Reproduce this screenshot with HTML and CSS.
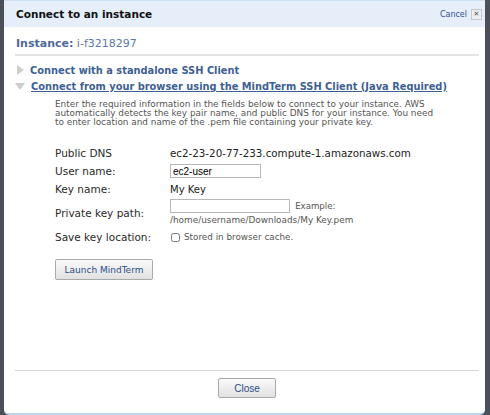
FILE: index.html
```html
<!DOCTYPE html>
<html lang="en">
<head>
    <meta charset="UTF-8">
    <title>Connect to an instance</title>
    <link rel="stylesheet" href="styles.css">
</head>
<body>
    <div class="dialog">
        <div class="dialog-header">
            <h1>Connect to an instance</h1>
            <a class="cancel" href="#">Cancel <span class="close-x">&#x2715;</span></a>
        </div>

        <div class="dialog-body">
            <h2 class="instance"><strong>Instance:</strong> i-f3218297</h2>

            <div class="option first">
                <span class="arrow arrow-right"></span>
                <a href="#" class="option-link">Connect with a standalone SSH Client</a>
            </div>
            <div class="option">
                <span class="arrow arrow-down"></span>
                <a href="#" class="option-link open">Connect from your browser using the MindTerm SSH Client (Java Required)</a>
            </div>

            <div class="mindterm">
                <p class="intro">Enter the required information in the fields below to connect to your instance. AWS automatically detects the key pair name, and public DNS for your instance. You need to enter location and name of the .pem file containing your private key.</p>

                <div class="fields">
                    <div class="label">Public DNS</div>
                    <div class="value dns">ec2-23-20-77-233.compute-1.amazonaws.com</div>

                    <div class="label">User name:</div>
                    <div class="value"><input type="text" class="user" value="ec2-user"></div>

                    <div class="label">Key name:</div>
                    <div class="value keyname">My Key</div>

                    <div class="label tall">Private key path:</div>
                    <div class="value tall">
                        <input type="text" class="keypath"> <span class="hint example">Example:</span>
                        <div class="hint path">/home/username/Downloads/My Key.pem</div>
                    </div>

                    <div class="label">Save key location:</div>
                    <div class="value"><label class="hint check"><input type="checkbox"> Stored in browser cache.</label></div>
                </div>

                <button type="button" class="btn launch">Launch MindTerm</button>
            </div>
        </div>

        <div class="dialog-footer">
            <button type="button" class="btn close">Close</button>
        </div>
    </div>
</body>
</html>
```

FILE: styles.css
```css
html, body {
    margin: 0;
    padding: 0;
    height: 100%;
}

body {
    background: #4b4f57;
    font-family: "DejaVu Sans", Verdana, sans-serif;
    color: #222;
}

.dialog {
    margin: 0 5px 0 4px;
    height: 413px;
    background: #fff;
    border-bottom: 2px solid #b9d6f2;
    border-radius: 0 0 5px 5px;
    display: flex;
    flex-direction: column;
}

.dialog-header {
    height: 27px;
    background: #e6eefa;
    border-top: 1px solid #cfe0f5;
    box-sizing: border-box;
    display: flex;
    align-items: center;
    justify-content: space-between;
    padding: 0 3px 0 12px;
}

.dialog-header h1 {
    margin: 0;
    font-size: 10.5px;
    font-weight: bold;
    color: #111;
}

.cancel {
    font-size: 8px;
    color: #2f4f8a;
    text-decoration: none;
    display: flex;
    align-items: center;
    gap: 4px;
}

.close-x {
    display: inline-flex;
    align-items: center;
    justify-content: center;
    width: 9px;
    height: 9px;
    border: 1px solid #c4c8cf;
    background: #eceef1;
    color: #555;
    font-size: 7px;
}

.dialog-body {
    flex: 1;
    padding: 0 6px 0 11px;
}

.instance {
    margin: 10px 0 0;
    padding: 0 0 4px 1px;
    font-size: 11px;
    line-height: 13px;
    font-weight: normal;
    color: #5a79a8;
    border-bottom: 2px solid #e3e3e3;
}

.instance strong {
    color: #4d6a98;
}

.option {
    display: flex;
    align-items: center;
    gap: 6px;
    height: 16px;
}

.option.first {
    margin-top: 6px;
}

.arrow {
    width: 0;
    height: 0;
    margin-left: 2px;
}

.arrow-right {
    border-top: 5px solid transparent;
    border-bottom: 5px solid transparent;
    border-left: 7px solid #cdcdcd;
}

.arrow-down {
    border-left: 5px solid transparent;
    border-right: 5px solid transparent;
    border-top: 7px solid #cdcdcd;
    margin-left: 0;
}

.option-link {
    font-size: 9.85px;
    font-weight: bold;
    color: #3e5f94;
    text-decoration: none;
}

.option-link.open {
    text-decoration: underline;
}

.mindterm {
    padding-left: 40px;
}

.intro {
    margin: 6px 0 0;
    font-size: 8.9px;
    line-height: 9px;
    color: #555;
    width: 382px;
}

.fields {
    display: grid;
    grid-template-columns: 115px 1fr;
    margin-top: 17px;
}

.label {
    font-size: 10.5px;
    color: #2a2a2a;
    display: flex;
    align-items: center;
    height: 18px;
}

.label.tall {
    height: 30px;
}

.value {
    font-size: 10px;
    height: 18px;
}

.value.tall {
    height: 30px;
}

.dns {
    font-size: 10.3px;
    display: flex;
    align-items: center;
}

.keyname {
    display: flex;
    align-items: center;
}

input[type="text"] {
    font-family: "Liberation Sans", Arial, sans-serif;
    font-size: 10px;
    border: 1px solid #b8b8b8;
    padding: 1px 2px;
    height: 14px;
    box-sizing: border-box;
    margin: 2px 0 0;
    vertical-align: top;
}

.keypath {
    width: 120px;
}

.tall input[type="text"] {
    margin-top: 1px;
}

.user {
    width: 91px;
}

.hint {
    font-size: 8px;
    color: #555;
}

.example {
    font-size: 8.6px;
    line-height: 16px;
    margin-left: 2px;
}

.path {
    font-size: 8.9px;
    line-height: 10px;
    margin-top: 1px;
}

.check {
    display: flex;
    align-items: center;
    gap: 4px;
    height: 18px;
    font-size: 8.8px;
}

.check input {
    margin: 0 0 0 1px;
    width: 9px;
    height: 9px;
}

.btn {
    font-family: "DejaVu Sans", Verdana, sans-serif;
    background: linear-gradient(#fafafa, #e1e1e1);
    border: 1px solid #a9a9a9;
    border-radius: 2px;
    color: #2c4c88;
    cursor: pointer;
}

.launch {
    margin-top: 13px;
    font-size: 9px;
    height: 21px;
    width: 98px;
    padding: 0;
}

.dialog-footer {
    margin: 0 6px 0 11px;
    border-top: 1px solid #d6d6d6;
    display: flex;
    justify-content: center;
    padding: 7px 0 15px;
}

.close {
    font-family: "Liberation Sans", Arial, sans-serif;
    font-size: 10px;
    width: 58px;
    height: 20px;
    padding: 0;
}
```
